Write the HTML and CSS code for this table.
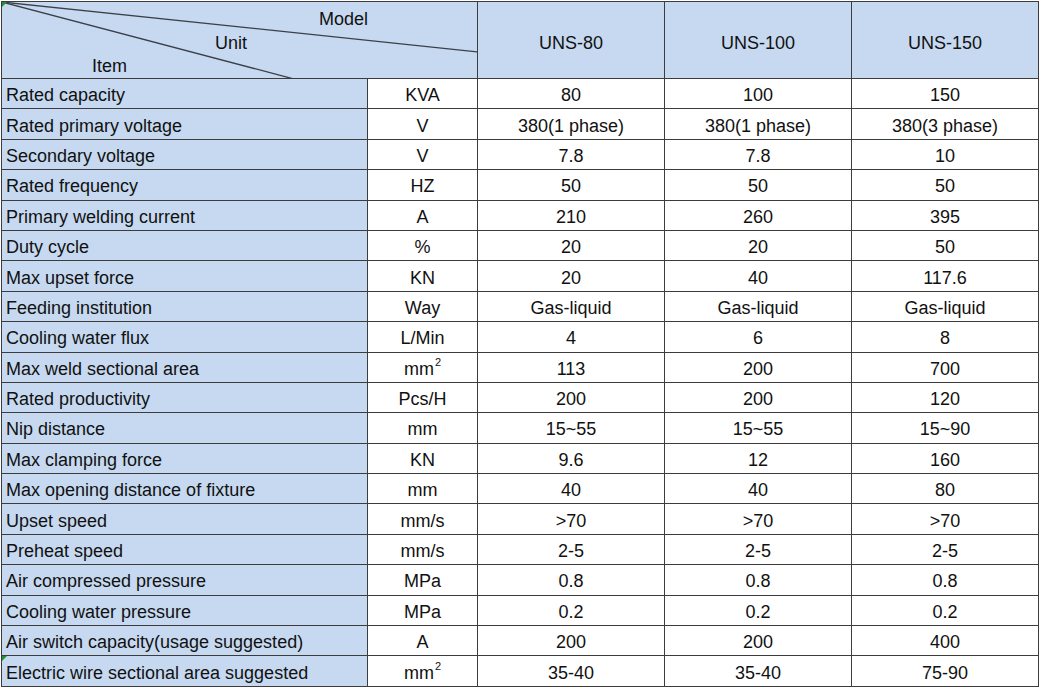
FILE: index.html
```html
<!DOCTYPE html>
<html>
<head>
<meta charset="utf-8">
<link rel="stylesheet" href="styles.css">
</head>
<body>
<table class="spec">
  <colgroup>
    <col class="c-item"><col class="c-unit"><col class="c-val"><col class="c-val"><col class="c-val">
  </colgroup>
  <tr class="head">
    <td colspan="2" class="corner">
      <svg class="diag" width="476" height="77" viewBox="0 0 476 77" preserveAspectRatio="none">
        <line x1="0" y1="0" x2="476" y2="50" stroke="#3a3f48" stroke-width="1.3"/>
        <line x1="0" y1="0" x2="292" y2="77" stroke="#3a3f48" stroke-width="1.3"/>
      </svg>
      <span class="lbl lbl-model">Model</span>
      <span class="lbl lbl-unit">Unit</span>
      <span class="lbl lbl-item">Item</span>
      <span class="flag"></span>
    </td>
    <td class="hv">UNS-80</td>
    <td class="hv">UNS-100</td>
    <td class="hv">UNS-150</td>
  </tr>
  <tr><td class="item">Rated capacity</td><td class="u">KVA</td><td>80</td><td>100</td><td>150</td></tr>
  <tr><td class="item">Rated primary voltage</td><td class="u">V</td><td>380(1 phase)</td><td>380(1 phase)</td><td>380(3 phase)</td></tr>
  <tr><td class="item">Secondary voltage</td><td class="u">V</td><td>7.8</td><td>7.8</td><td>10</td></tr>
  <tr><td class="item">Rated frequency</td><td class="u">HZ</td><td>50</td><td>50</td><td>50</td></tr>
  <tr><td class="item">Primary welding current</td><td class="u">A</td><td>210</td><td>260</td><td>395</td></tr>
  <tr><td class="item">Duty cycle</td><td class="u">%</td><td>20</td><td>20</td><td>50</td></tr>
  <tr><td class="item">Max upset force</td><td class="u">KN</td><td>20</td><td>40</td><td>117.6</td></tr>
  <tr><td class="item">Feeding institution</td><td class="u">Way</td><td>Gas-liquid</td><td>Gas-liquid</td><td>Gas-liquid</td></tr>
  <tr><td class="item">Cooling water flux</td><td class="u">L/Min</td><td>4</td><td>6</td><td>8</td></tr>
  <tr><td class="item">Max weld sectional area</td><td class="u">mm<sup>2</sup></td><td>113</td><td>200</td><td>700</td></tr>
  <tr><td class="item">Rated productivity</td><td class="u">Pcs/H</td><td>200</td><td>200</td><td>120</td></tr>
  <tr><td class="item">Nip distance</td><td class="u">mm</td><td>15~55</td><td>15~55</td><td>15~90</td></tr>
  <tr><td class="item">Max clamping force</td><td class="u">KN</td><td>9.6</td><td>12</td><td>160</td></tr>
  <tr><td class="item">Max opening distance of fixture</td><td class="u">mm</td><td>40</td><td>40</td><td>80</td></tr>
  <tr><td class="item">Upset speed</td><td class="u">mm/s</td><td>&gt;70</td><td>&gt;70</td><td>&gt;70</td></tr>
  <tr><td class="item">Preheat speed</td><td class="u">mm/s</td><td>2-5</td><td>2-5</td><td>2-5</td></tr>
  <tr><td class="item">Air compressed pressure</td><td class="u">MPa</td><td>0.8</td><td>0.8</td><td>0.8</td></tr>
  <tr><td class="item">Cooling water pressure</td><td class="u">MPa</td><td>0.2</td><td>0.2</td><td>0.2</td></tr>
  <tr><td class="item">Air switch capacity(usage suggested)</td><td class="u">A</td><td>200</td><td>200</td><td>400</td></tr>
  <tr><td class="item flagged"><span class="flag"></span>Electric wire sectional area suggested</td><td class="u">mm<sup>2</sup></td><td>35-40</td><td>35-40</td><td>75-90</td></tr>
</table>
</body>
</html>
```
FILE: styles.css
```css
html, body {
  margin: 0;
  padding: 0;
  background: #ffffff;
}
body {
  padding: 1px 0 0 1px;
  font-family: "Liberation Sans", Arial, sans-serif;
  font-size: 18px;
  color: #111111;
}
.spec {
  border-collapse: collapse;
  table-layout: fixed;
  width: 1038px;
}
.c-item { width: 366px; }
.c-unit { width: 110px; }
.c-val { width: 187px; }
.spec td {
  border: 1px solid #3c3c3c;
  padding: 3px 2px 0 2px;
  height: 30.4px;
  box-sizing: border-box;
  text-align: center;
  vertical-align: middle;
  white-space: nowrap;
  line-height: 20px;
}
.spec tr.head td {
  height: 77px;
  background: #c6d9f0;
  padding: 0;
}
.spec td.item {
  background: #c6d9f0;
  text-align: left;
  padding-left: 4px;
  position: relative;
}
.corner {
  position: relative;
  overflow: hidden;
}
.diag {
  position: absolute;
  left: 0;
  top: 0;
}
.lbl {
  position: absolute;
  line-height: 20px;
}
.lbl-model { left: 317px; top: 7px; }
.lbl-unit { left: 213px; top: 31px; }
.lbl-item { left: 90px; top: 54px; }
.spec tr.head td.hv { padding-top: 6px; }
sup {
  font-size: 11px;
  line-height: 0;
  vertical-align: 9px;
  margin-left: 1px;
}
.flag {
  position: absolute;
  left: 0;
  top: 0;
  width: 0;
  height: 0;
  border-top: 5px solid #1f8f3a;
  border-right: 5px solid transparent;
}
```
